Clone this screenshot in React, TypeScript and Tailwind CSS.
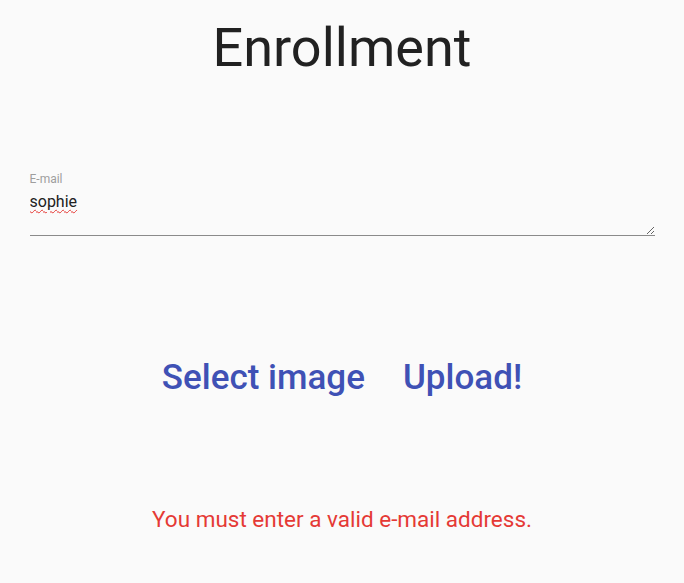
import React from 'react';

export default function App() {
    return (
        <div className="min-h-[583px] w-full bg-[#fafafa] font-['Roboto',sans-serif] flex flex-col items-center">
            <h1 className="mt-[14px] text-[54px] leading-[68px] font-normal text-[#212121]">Enrollment</h1>

            <div className="mt-[90px] w-[625px] flex flex-col">
                <label className="text-[12px] leading-[14px] text-[#9e9e9e]">E-mail</label>
                <div className="mt-[5px] h-[45px] resize overflow-auto border-b border-[#8a8a8a] text-[16px] leading-[22px] text-[#212121]">
                    <span className="underline decoration-wavy decoration-[#e53935] decoration-1 underline-offset-2">sophie</span>
                </div>
            </div>

            <div className="mt-[122px] flex items-center gap-[38px]">
                <button className="text-[35px] leading-[40px] font-medium text-[#3f51b5]">Select image</button>
                <button className="text-[35px] leading-[40px] font-medium text-[#3f51b5]">Upload!</button>
            </div>

            <p className="mt-[107px] text-[22.5px] leading-[28px] text-[#e53935]">You must enter a valid e-mail address.</p>
        </div>
    );
}
